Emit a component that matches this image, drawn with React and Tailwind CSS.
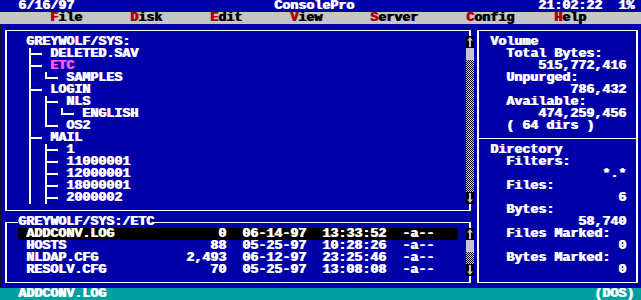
import React from "react";

const BLUE = "bg-[#0000a8]";

// one text-mode row: parts are [column, text, className]
const Line = ({ parts, className = "" }) => {
  let cur = 0;
  const out = [];
  parts.forEach(([col, text, cls], i) => {
    if (col > cur) out.push(" ".repeat(col - cur));
    out.push(
      <span key={i} className={cls}>
        {text}
      </span>
    );
    cur = col + text.length;
  });
  return <div className={"h-[12px] whitespace-pre " + className}>{out}</div>;
};

const Arrow = ({ down }) => (
  <div className="h-[12px] w-[8px] bg-black">
    <svg width="8" height="12" viewBox="0 0 8 12" className={down ? "rotate-180" : ""}>
      <path d="M4 1 L7 4.5 L5 4.5 L5 11 L3 11 L3 4.5 L1 4.5 Z" fill="#c6c6c6" />
    </svg>
  </div>
);

const ScrollBar = ({ rows, className = "" }) => (
  <div className={"w-[8px] shrink-0 flex flex-col " + className}>
    <Arrow />
    <div className="h-[12px] bg-[#c6c6c6]" />
    <div
      className="bg-[image:repeating-conic-gradient(#c6c6c6_0_25%,#000_0_50%)] bg-[length:2px_2px]"
      style={{ height: (rows - 3) * 12 }}
    />
    <Arrow down />
  </div>
);

// tree connector drawn cell by cell: | = pipe, T = tee, L = corner, - = dash
const Branch = ({ code }) => (
  <svg width={code.length * 8} height="12" className="shrink-0" fill="#fff">
    {code.split("").map((c, i) => {
      const x = i * 8;
      if (c === "|") return <rect key={i} x={x + 3} y="0" width="2" height="12" />;
      if (c === "T")
        return (
          <g key={i}>
            <rect x={x + 3} y="0" width="2" height="12" />
            <rect x={x + 3} y="5" width="5" height="2" />
          </g>
        );
      if (c === "L")
        return (
          <g key={i}>
            <rect x={x + 3} y="0" width="2" height="7" />
            <rect x={x + 3} y="5" width="5" height="2" />
          </g>
        );
      if (c === "-") return <rect key={i} x={x} y="5" width="8" height="2" />;
      return null;
    })}
  </svg>
);

const tree = [
  ["", "GREYWOLF/SYS:"],
  ["T- ", "DELETED.SAV"],
  ["T- ", "ETC", "text-[#ff55ff]"],
  ["| L- ", "SAMPLES"],
  ["T- ", "LOGIN"],
  ["| T- ", "NLS"],
  ["| | L- ", "ENGLISH"],
  ["| L- ", "OS2"],
  ["T- ", "MAIL"],
  ["| T- ", "1"],
  ["| T- ", "11000001"],
  ["| T- ", "12000001"],
  ["| T- ", "18000001"],
  ["| T- ", "2000002"],
];

const files = [
  ["ADDCONV.LOG", "0", "06-14-97", "13:33:52", "-a--"],
  ["HOSTS", "88", "05-25-97", "10:28:26", "-a--"],
  ["NLDAP.CFG", "2,493", "06-12-97", "23:25:46", "-a--"],
  ["RESOLV.CFG", "70", "05-25-97", "13:08:08", "-a--"],
];

const menu = [
  [6, "File"],
  [16, "Disk"],
  [26, "Edit"],
  [36, "View"],
  [46, "Server"],
  [58, "Config"],
  [69, "Help"],
];

const Label = ({ children }) => <div className="h-[12px] pl-[16px] whitespace-pre">{children}</div>;
const Value = ({ children }) => <div className="h-[12px] text-right whitespace-pre">{children}</div>;

export default function App() {
  return (
    <div className="w-[641px] h-[300px] overflow-hidden bg-[#0000a8] text-white font-['Liberation_Mono','DejaVu_Sans_Mono',monospace] font-bold text-[13.33px] leading-[12px] [text-shadow:1px_0_0_currentColor]">
      {/* title bar */}
      <Line
        className="pl-[2px]"
        parts={[
          [2, "6/16/97"],
          [34, "ConsolePro"],
          [67, "21:02:22"],
          [77, "1%"],
        ]}
      />

      {/* menu bar */}
      <Line
        className="pl-[2px] bg-[#c6c6c6] text-black"
        parts={menu.flatMap(([col, word]) => [
          [col, word[0], "text-[#a80000]"],
          [col + 1, word.slice(1)],
        ])}
      />

      <div className="flex h-[264px]">
        <div className="w-[2px] shrink-0 bg-[#141414]" />

        {/* left column */}
        <div className="w-[472px] shrink-0 flex flex-col">
          <div className="h-[192px] pt-[6px] pb-[5px] px-[3px]">
            <div className="h-full border-x-2 border-y border-white pt-[5px] pb-[6px] pl-[19px] flex">
              <div className="flex-1">
                {tree.map(([code, name, cls], i) => (
                  <div key={i} className="h-[12px] flex whitespace-pre">
                    {code && <Branch code={code} />}
                    <span className={cls}>{name}</span>
                  </div>
                ))}
              </div>
              <ScrollBar rows={14} className="-mr-[5px]" />
            </div>
          </div>

          <div className="h-[72px] pt-[6px] pb-[5px] px-[3px]">
            <div className="h-full border-x-2 border-y border-white pl-[11px] pb-[6px] flex flex-col">
              <div className="-mt-[7px] h-[12px] whitespace-pre">
                <span className={BLUE}>GREYWOLF/SYS:/ETC</span>
              </div>
              <div className="flex">
                <div className="w-[440px] shrink-0">
                  {files.map(([name, size, date, time, attr], i) => (
                    <div
                      key={name}
                      className={"h-[12px] whitespace-pre " + (i === 0 ? "bg-black" : "")}
                    >
                      {" " +
                        name.padEnd(14) +
                        size.padStart(11) +
                        "  " +
                        date +
                        "  " +
                        time +
                        "  " +
                        attr}
                    </div>
                  ))}
                </div>
                <ScrollBar rows={4} className="ml-[8px] -mr-[5px]" />
              </div>
            </div>
          </div>
        </div>

        {/* info panel */}
        <div className="w-[168px] shrink-0 pt-[6px] pb-[5px] pl-[3px] pr-[4px]">
          <div className="h-full border-x-2 border-y border-white pt-[5px] pb-[6px] flex flex-col">
            <div className="pl-[11px] pr-[10px]">
              <div className="h-[12px]">Volume</div>
              <Label>Total Bytes:</Label>
              <Value>515,772,416</Value>
              <Label>Unpurged:</Label>
              <Value>786,432</Value>
              <Label>Available:</Label>
              <Value>474,259,456</Value>
              <Label>( 64 dirs )</Label>
            </div>
            <div className="h-[12px] pt-[6px]">
              <div className="h-px bg-white" />
            </div>
            <div className="pl-[11px] pr-[10px]">
              <div className="h-[12px]">Directory</div>
              <Label>Filters:</Label>
              <Value>*.*</Value>
              <Label>Files:</Label>
              <Value>6</Value>
              <Label>Bytes:</Label>
              <Value>58,740</Value>
              <Label>Files Marked:</Label>
              <Value>0</Value>
              <Label>Bytes Marked:</Label>
              <Value>0</Value>
            </div>
          </div>
        </div>
      </div>

      {/* status bar */}
      <div className="h-[12px] bg-[#00a0a0] flex justify-between pl-[18px] pr-[7px] whitespace-pre">
        <span>ADDCONV.LOG</span>
        <span>(DOS)</span>
      </div>
    </div>
  );
}
